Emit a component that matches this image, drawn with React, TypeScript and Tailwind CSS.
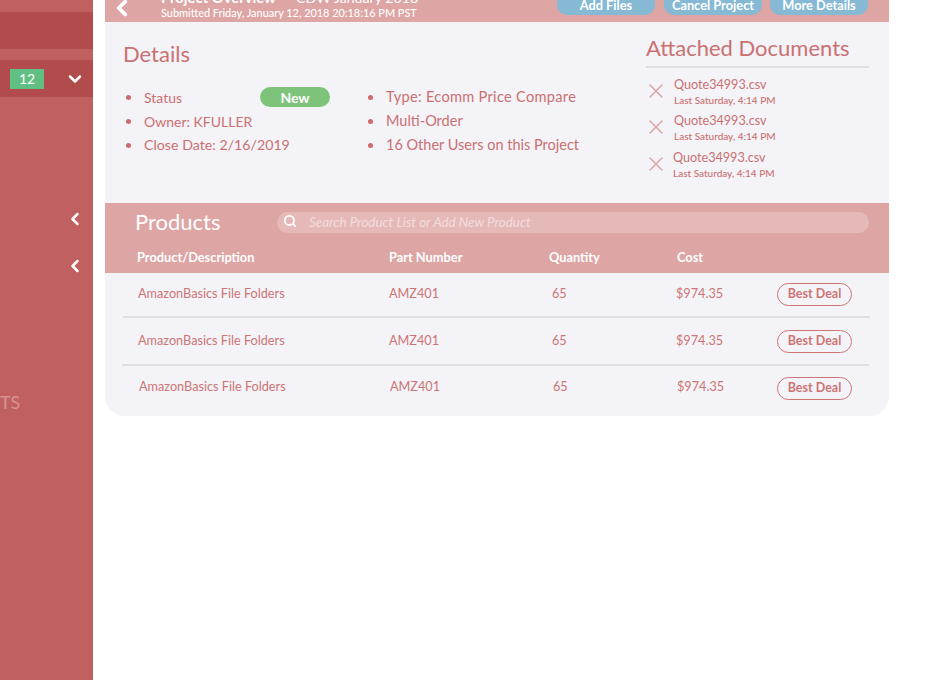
import { ChevronLeft, ChevronDown, Search, X } from "lucide-react";

const docs = [
  { shift: "ml-0", gap: "mt-0" },
  { shift: "ml-0", gap: "mt-[6px]" },
  { shift: "-ml-px", gap: "mt-[7px]" },
];

function Doc({ shift, gap }: { shift: string; gap: string }) {
  return (
    <div className={`flex items-center gap-[6px] -ml-[2px] ${gap}`}>
      <X size={24} strokeWidth={1.5} className="text-[#dfa3a3] shrink-0" />
      <div className={shift}>
        <p className="text-[12.6px] leading-[18px] text-[#cb7070]">Quote34993.csv</p>
        <p className="text-[10px] leading-[12px] text-[#cb7070] font-medium">Last Saturday, 4:14 PM</p>
      </div>
    </div>
  );
}

function Bullet({ size, children }: { size: string; children: React.ReactNode }) {
  return (
    <li className={`flex items-center h-6 text-[#cb7070] ${size}`}>
      <span className="w-[5px] h-[5px] rounded-full bg-[#cb6b6b] ml-[3px] mr-[13px] shrink-0"></span>
      {children}
    </li>
  );
}

function ProductRow({ cls, textCls, badgeCls }: { cls: string; textCls: string; badgeCls: string }) {
  return (
    <div className={`grid grid-cols-[251px_162px_125px_101px_1fr] items-center text-[12.7px] text-[#cf7474] ${cls}`}>
      <span className={textCls}>AmazonBasics File Folders</span>
      <span className={textCls}>AMZ401</span>
      <span className={`pl-px ${textCls}`}>65</span>
      <span className={textCls}>$974.35</span>
      <span className={`w-[75px] h-[23px] rounded-full border border-[#cf7474] flex items-center justify-center font-bold text-[12.5px] text-[#cf7474] ${badgeCls}`}>
        Best Deal
      </span>
    </div>
  );
}

export default function App() {
  return (
    <div className="flex w-[950px] h-[680px] overflow-hidden bg-white font-['Lato','Liberation_Sans',sans-serif]">
      {/* Sidebar */}
      <aside className="w-[93px] h-full bg-[#c06060] shrink-0 flex flex-col pt-3">
        <div className="h-[37px] bg-[#b24c4c]"></div>
        <div className="h-[37px] mt-[11px] bg-[#b24c4c] flex items-center pl-[10px]">
          <span className="w-[34px] h-5 bg-[#62bf83] text-white text-[14px] flex items-center justify-center">12</span>
          <ChevronDown size={20} strokeWidth={3} className="text-white ml-[21px]" />
        </div>
        <div className="mt-[112px] flex justify-end pr-2">
          <ChevronLeft size={20} strokeWidth={3} className="text-white" />
        </div>
        <div className="mt-[27px] flex justify-end pr-2">
          <ChevronLeft size={20} strokeWidth={3} className="text-white" />
        </div>
        <p className="mt-[115px] text-[18px] leading-[22px] text-[#d99393]">TS</p>
      </aside>

      {/* Main */}
      <main className="ml-3 w-[784px] shrink-0">
        <div className="h-[22px] bg-[#dda5a4] flex items-end overflow-hidden">
          <ChevronLeft size={26} strokeWidth={3.5} className="text-white ml-[4px] mb-[1px] shrink-0" />
          <div className="ml-[26px] w-[395px] shrink-0 text-white">
            <p className="text-[14.8px] leading-[14px] mb-[1px] font-bold whitespace-nowrap">
              Project Overview <span className="font-normal text-[14.2px] ml-[5px]">– CDW January 2018</span>
            </p>
            <p className="text-[10.9px] leading-[13px] pb-[3px] font-medium whitespace-nowrap">
              Submitted Friday, January 12, 2018 20:18:16 PM PST
            </p>
          </div>
          <div className="flex items-end gap-[9px] ml-[1px] mb-[7px] text-white text-[12.8px] font-bold leading-none">
            <span className="w-[98px] h-5 rounded-b-[10px] bg-[#86b9d4] flex items-center justify-center">Add Files</span>
            <span className="w-[98px] h-5 rounded-b-[10px] bg-[#86b9d4] flex items-center justify-center">Cancel Project</span>
            <span className="w-[98px] h-5 -ml-px rounded-b-[10px] bg-[#86b9d4] flex items-center justify-center">More Details</span>
          </div>
        </div>

        <div className="bg-[#f3f3f8] rounded-b-[20px] h-[394px] overflow-hidden">
          {/* Details */}
          <div className="h-[181px] flex">
            <div className="w-[541px] pl-[18px] pt-[19px]">
              <h2 className="text-[22px] leading-[26px] text-[#cb7070]">Details</h2>
              <div className="flex mt-[18px]">
                <ul className="w-[242px]">
                  <li className="flex items-center h-6 text-[14px] text-[#cb7070]">
                    <span className="w-[5px] h-[5px] rounded-full bg-[#cb6b6b] ml-[3px] mr-[13px] shrink-0"></span>
                    <span className="w-[116px]">Status</span>
                    <span className="w-[70px] h-5 rounded-full bg-[#7dc47a] text-white font-bold text-[14px] flex items-center justify-center">New</span>
                  </li>
                  <Bullet size="text-[14px]">Owner: KFULLER</Bullet>
                  <Bullet size="text-[14.2px]">Close Date: 2/16/2019</Bullet>
                </ul>
                <ul>
                  <Bullet size="text-[14.6px] tracking-[0.02em]">Type: Ecomm Price Compare</Bullet>
                  <Bullet size="text-[14.5px]">Multi-Order</Bullet>
                  <Bullet size="text-[14.5px]">16 Other Users on this Project</Bullet>
                </ul>
              </div>
            </div>
            <div className="w-[223px] pt-[13px]">
              <h2 className="text-[22px] leading-[26px] text-[#cb7070] whitespace-nowrap">Attached Documents</h2>
              <div className="h-0.5 bg-[#e0dfe6] mt-[5px]"></div>
              <div className="mt-[8px] flex flex-col">
                {docs.map((d, i) => (
                  <Doc key={i} shift={d.shift} gap={d.gap} />
                ))}
              </div>
            </div>
          </div>

          {/* Products */}
          <div className="h-[70px] bg-[#dda5a4] text-white">
            <div className="flex items-center h-[38px]">
              <h2 className="ml-[30px] w-[142px] text-[22px] leading-none -mt-[1px]">Products</h2>
              <div className="w-[592px] h-[21px] rounded-full bg-[#e5b9b8] flex items-center pl-[6px]">
                <Search size={14} strokeWidth={3} className="text-white -mt-[2px]" />
                <span className="ml-[12px] text-[13.4px] italic text-[#f3dcdc]">Search Product List or Add New Product</span>
              </div>
            </div>
            <div className="grid grid-cols-[252px_160px_128px_1fr] pl-8 pt-[7px] text-[12.8px] font-bold">
              <span>Product/Description</span>
              <span>Part Number</span>
              <span>Quantity</span>
              <span>Cost</span>
            </div>
          </div>

          <ProductRow cls="pl-[33px] h-[43px]" textCls="-mt-[2px]" badgeCls="" />
          <div className="h-0.5 bg-[#e0dfe6] ml-[18px] mr-[19px]"></div>
          <ProductRow cls="pl-[33px] h-[46px]" textCls="" badgeCls="" />
          <div className="h-0.5 bg-[#e0dfe6] ml-[17px] mr-5"></div>
          <ProductRow cls="pl-[34px] h-[44px]" textCls="-mt-[2px]" badgeCls="-ml-px" />
        </div>
      </main>
    </div>
  );
}
